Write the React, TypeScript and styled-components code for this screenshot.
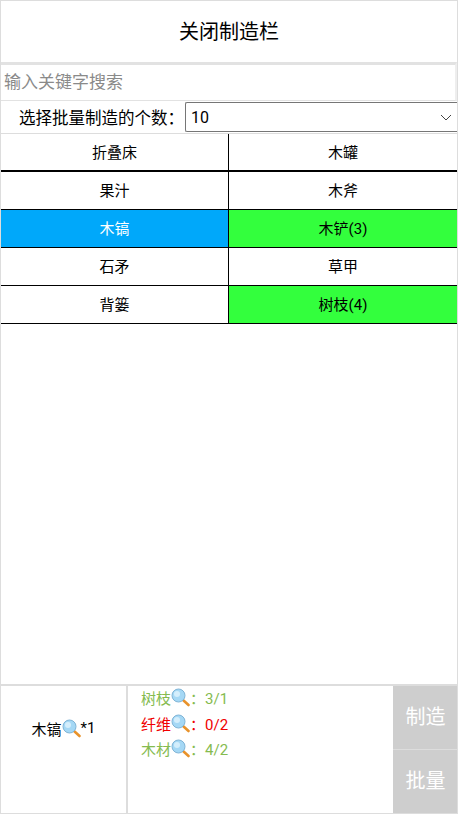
import styled, { createGlobalStyle } from 'styled-components';

const GlobalStyle = createGlobalStyle`
  html, body {
    margin: 0;
    padding: 0;
    background: #fff;
  }
  * {
    box-sizing: border-box;
  }
`;

const Page = styled.div`
  width: 458px;
  height: 814px;
  display: flex;
  flex-direction: column;
  border: 1px solid #ddd;
  font-family: Roboto, "Noto Sans CJK SC", sans-serif;
  color: #000;
  overflow: hidden;
`;

const Header = styled.div`
  height: 61px;
  flex: none;
  display: flex;
  align-items: center;
  justify-content: center;
  padding-bottom: 2px;
  font-size: 20px;
`;

const SearchInput = styled.input`
  height: 39px;
  flex: none;
  width: 100%;
  border: 0 solid #eee;
  border-top: 3px solid #e2e2e2;
  border-right-width: 2px;
  border-bottom: 1px solid #e2e2e2;
  padding: 0 3px 2px;
  outline: none;
  font-family: inherit;
  font-size: 17px;
  &::placeholder {
    color: #8a8a8a;
    opacity: 1;
  }
`;

const BatchRow = styled.div`
  height: 33px;
  flex: none;
  display: flex;
  align-items: center;
  border-bottom: 1px solid #ddd;
`;

const BatchLabel = styled.div`
  width: 184px;
  flex: none;
  text-align: right;
  font-size: 16.5px;
  white-space: nowrap;
  padding-right: 1px;
`;

const BatchSelect = styled.div`
  flex: 1;
  height: 30px;
  display: flex;
  align-items: center;
  justify-content: space-between;
  border: 1px solid #767676;
  border-radius: 2px 0 0 2px;
  border-right: none;
  padding: 0 5px;
  font-size: 16px;
`;

const RecipeGrid = styled.div`
  flex: none;
  display: grid;
  grid-template-columns: 228px 228px;
  grid-auto-rows: 38px;
`;

const RecipeCell = styled.div<{ $bg?: string; $light?: boolean; $first?: boolean; $thick?: boolean }>`
  display: flex;
  align-items: center;
  justify-content: center;
  padding-bottom: 2px;
  font-size: 15px;
  background: ${(p) => p.$bg || '#fff'};
  color: ${(p) => (p.$light ? '#fff' : '#000')};
  border-bottom: ${(p) => (p.$thick ? '2px' : '1px')} solid #000;
  border-right: ${(p) => (p.$first ? '1px solid #000' : 'none')};
`;

const Spacer = styled.div`
  flex: 1;
`;

const Footer = styled.div`
  height: 129px;
  flex: none;
  display: flex;
  border-top: 2px solid #ddd;
`;

const Product = styled.div`
  width: 127px;
  flex: none;
  display: flex;
  align-items: center;
  justify-content: center;
  font-size: 15px;
  padding-bottom: 43px;
  border-right: 2px solid #ddd;
`;

const Materials = styled.div`
  flex: 1;
  margin-top: -1px;
  padding-left: 13px;
  display: flex;
  flex-direction: column;
`;

const Material = styled.div<{ $lack?: boolean }>`
  height: 25.5px;
  display: flex;
  align-items: center;
  font-size: 15px;
  color: ${(p) => (p.$lack ? '#f00000' : '#85bb4f')};
`;

const Actions = styled.div`
  width: 64px;
  flex: none;
  display: flex;
  flex-direction: column;
`;

const ActionButton = styled.div`
  flex: 1;
  display: flex;
  align-items: center;
  justify-content: center;
  padding: 0 0 4px 1px;
  background: #cecece;
  color: #fff;
  font-size: 20px;
  & + & {
    border-top: 1px solid #ddd;
  }
`;

const Mag = styled.svg`
  width: 19px;
  height: 19px;
  flex: none;
  display: inline-block;
`;

const Magnifier = () => (
  <Mag viewBox="0 0 19 19">
    <line x1="12" y1="12" x2="17.5" y2="17" stroke="#e8922a" strokeWidth="2.6" strokeLinecap="round" />
    <circle cx="7.5" cy="7.5" r="6.5" fill="#a5d8f5" stroke="#7fb4d6" strokeWidth="1" />
    <circle cx="6" cy="6" r="3" fill="#d4eefc" />
  </Mag>
);

const Chevron = () => (
  <svg width="12" height="7" viewBox="0 0 12 7">
    <path d="M1 1l5 5 5-5" fill="none" stroke="#444" strokeWidth="1" />
  </svg>
);

const recipes = [
  { name: '折叠床' },
  { name: '木罐' },
  { name: '果汁' },
  { name: '木斧' },
  { name: '木镐', bg: '#00a8fa', light: true },
  { name: '木铲(3)', bg: '#33ff3d' },
  { name: '石矛' },
  { name: '草甲' },
  { name: '背篓' },
  { name: '树枝(4)', bg: '#33ff3d' },
];

const materials = [
  { name: '树枝', count: '3/1' },
  { name: '纤维', count: '0/2', lack: true },
  { name: '木材', count: '4/2' },
];

const App = () => {
  return (
    <>
      <GlobalStyle />
      <Page>
        <Header>关闭制造栏</Header>
        <SearchInput placeholder="输入关键字搜索" />
        <BatchRow>
          <BatchLabel>选择批量制造的个数：</BatchLabel>
          <BatchSelect>
            <span>10</span>
            <Chevron />
          </BatchSelect>
        </BatchRow>
        <RecipeGrid>
          {recipes.map((r, i) => (
            <RecipeCell key={r.name} $bg={r.bg} $light={r.light} $first={i % 2 === 0} $thick={i < 2}>
              {r.name}
            </RecipeCell>
          ))}
        </RecipeGrid>
        <Spacer />
        <Footer>
          <Product>
            木镐
            <Magnifier />
            *1
          </Product>
          <Materials>
            {materials.map((m) => (
              <Material key={m.name} $lack={m.lack}>
                {m.name}
                <Magnifier />
                ：{m.count}
              </Material>
            ))}
          </Materials>
          <Actions>
            <ActionButton>制造</ActionButton>
            <ActionButton>批量</ActionButton>
          </Actions>
        </Footer>
      </Page>
    </>
  );
};

export default App;
